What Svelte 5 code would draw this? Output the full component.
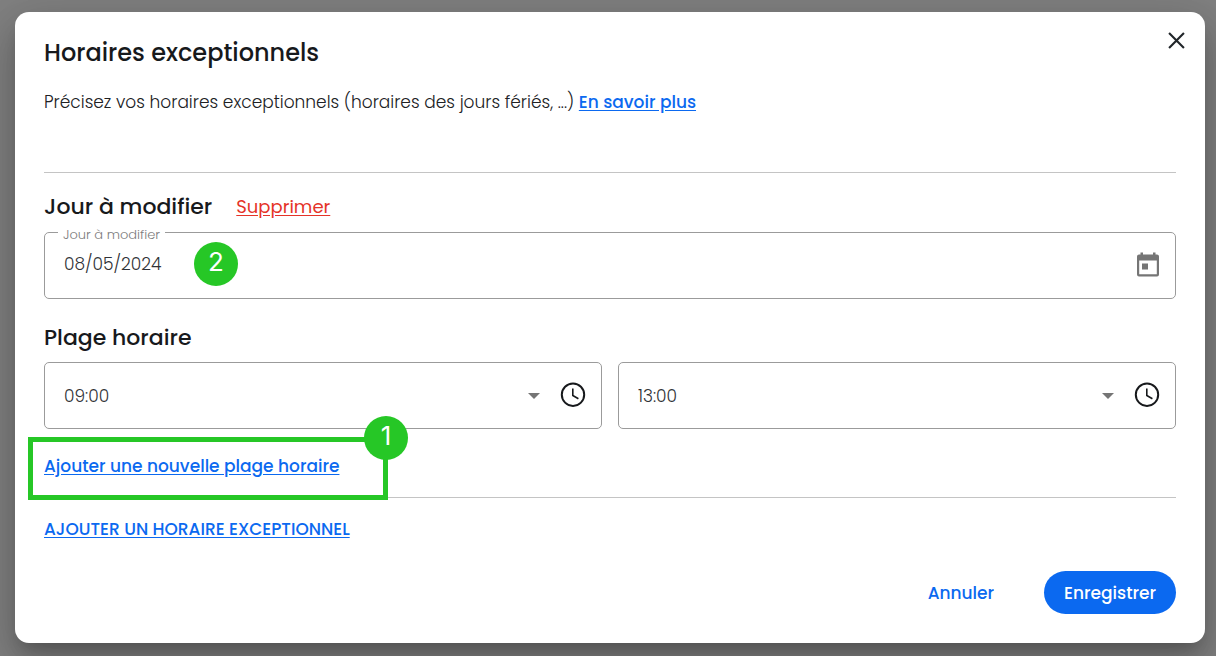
<script lang="ts">
	let date = $state('08/05/2024');
	let start = $state('09:00');
	let end = $state('13:00');

	const hours = Array.from({ length: 24 }, (_, h) => `${String(h).padStart(2, '0')}:00`);
</script>

{#snippet clock()}
	<svg class="clock" viewBox="0 0 26 26" aria-hidden="true">
		<circle cx="13" cy="12.7" r="11.2" fill="none" stroke="#17191c" stroke-width="2" />
		<path d="M12.8 6.5v7l5.6 3.2" fill="none" stroke="#17191c" stroke-width="1.6" />
	</svg>
{/snippet}

{#snippet arrow()}
	<svg class="arrow" viewBox="0 0 12 6" aria-hidden="true">
		<path d="M0 0h12L6 6z" fill="#757575" />
	</svg>
{/snippet}

<div class="backdrop">
	<div class="dialog" role="dialog" aria-modal="true" aria-labelledby="dialog-title">
		<header class="header">
			<h1 id="dialog-title">Horaires exceptionnels</h1>
			<button class="close" type="button" aria-label="Fermer">
				<svg viewBox="0 0 16 16" aria-hidden="true">
					<path d="M1 1l14 14M15 1L1 15" stroke="#202529" stroke-width="2" />
				</svg>
			</button>
		</header>

		<p class="intro">
			Précisez vos horaires exceptionnels (horaires des jours fériés, ...)
			<a href="#aide">En savoir plus</a>
		</p>

		<section class="day">
			<div class="day-title">
				<h2>Jour à modifier</h2>
				<button class="remove" type="button">Supprimer</button>
			</div>

			<div class="field date-field">
				<label class="floating-label" for="date">Jour à modifier</label>
				<input id="date" type="text" bind:value={date} />
				<button class="icon-button" type="button" aria-label="Ouvrir le calendrier">
					<svg viewBox="0 0 24 26" aria-hidden="true">
						<path
							d="M4.5 0.5H7v2h10v-2h2.5v2H21a2 2 0 0 1 2 2v18a2 2 0 0 1-2 2H3a2 2 0 0 1-2-2v-18a2 2 0 0 1 2-2h1.5zM3.2 8.5v13.8h17.6V8.5zM6 11.5h6v6H6z"
							fill="#757575"
							fill-rule="evenodd"
						/>
					</svg>
				</button>
				<span class="badge badge-date">2</span>
			</div>

			<h2 class="range-title">Plage horaire</h2>
			<div class="range">
				<div class="field">
					<select bind:value={start} aria-label="Heure de début">
						{#each hours as hour}
							<option value={hour}>{hour}</option>
						{/each}
					</select>
					{@render arrow()}
					{@render clock()}
				</div>
				<div class="field">
					<select bind:value={end} aria-label="Heure de fin">
						{#each hours as hour}
							<option value={hour}>{hour}</option>
						{/each}
					</select>
					{@render arrow()}
					{@render clock()}
				</div>
			</div>

			<div class="add-range">
				<a href="#plage">Ajouter une nouvelle plage horaire</a>
				<div class="highlight">
					<span class="badge badge-range">1</span>
				</div>
			</div>
		</section>

		<div class="add-day">
			<a href="#horaire">AJOUTER UN HORAIRE EXCEPTIONNEL</a>
		</div>

		<footer class="actions">
			<button class="cancel" type="button">Annuler</button>
			<button class="save" type="button">Enregistrer</button>
		</footer>
	</div>
</div>

<style>
	:global(body) {
		margin: 0;
		background: #808080;
	}

	.backdrop {
		box-sizing: border-box;
		min-height: 100vh;
		padding: 12px 11px 13px 15px;
		overflow: hidden;
		font-family: Poppins, Inter, sans-serif;
		font-size: 17px;
		line-height: 24px;
		font-weight: 300;
		color: #202124;
	}

	.dialog {
		padding: 25px 29px 29px;
		border-radius: 14px;
		background: #fff;
		box-shadow: 0 11px 15px -7px rgba(0, 0, 0, 0.2), 0 24px 38px 3px rgba(0, 0, 0, 0.14),
			0 9px 46px 8px rgba(0, 0, 0, 0.12);
	}

	h1,
	h2,
	p {
		margin: 0;
	}

	h1 {
		font-size: 24px;
		line-height: 32px;
		font-weight: 500;
		color: #17191c;
	}

	h2 {
		font-size: 22px;
		line-height: 32px;
		font-weight: 500;
		color: #17191c;
	}

	a {
		color: #0b69f0;
		font-weight: 500;
		text-underline-offset: 2px;
	}

	button {
		padding: 0;
		border: none;
		background: none;
		font: inherit;
		cursor: pointer;
	}

	.header {
		display: flex;
		align-items: flex-start;
		justify-content: space-between;
	}

	.close {
		margin: -5px -9px 0 0;
	}

	.close svg {
		display: block;
		width: 17px;
		height: 17px;
	}

	.intro {
		margin-top: 21px;
		padding-bottom: 58px;
		border-bottom: 1px solid #c4c4c4;
	}

	.day {
		padding-top: 18px;
		border-bottom: 1px solid #c4c4c4;
	}

	.day-title {
		display: flex;
		align-items: center;
		gap: 24px;
	}

	.remove {
		color: #e53328;
		font-size: 18px;
		font-weight: 400;
		text-decoration: underline;
		text-underline-offset: 2px;
	}

	.field {
		position: relative;
		box-sizing: border-box;
		display: flex;
		flex: 1;
		align-items: center;
		height: 67px;
		padding: 0 15px 2px 19px;
		border: 1px solid #9b9b9b;
		border-radius: 5px;
	}

	.date-field {
		margin-top: 9px;
	}

	.floating-label {
		position: absolute;
		top: -8px;
		left: 13px;
		padding: 0 5px;
		background: #fff;
		color: #7d7d7d;
		font-size: 13px;
		line-height: 20px;
	}

	input,
	select {
		flex: 1;
		min-width: 0;
		padding: 0;
		border: none;
		background: none;
		font: inherit;
		color: #303236;
		appearance: none;
		outline: none;
	}

	select {
		padding-top: 2px;
	}

	input {
		padding-bottom: 2px;
	}

	.icon-button svg {
		display: block;
		width: 24px;
		height: 26px;
	}

	.arrow {
		width: 12px;
		height: 6px;
		margin: 2px 20px 0 0;
	}

	.clock {
		width: 26px;
		height: 26px;
	}

	.range-title {
		margin-top: 23px;
	}

	.range {
		display: flex;
		gap: 16px;
		margin-top: 8px;
	}

	.add-range {
		position: relative;
		padding: 25px 0 19px;
	}

	.highlight {
		position: absolute;
		top: 8px;
		left: -16px;
		box-sizing: border-box;
		width: 360px;
		height: 63px;
		border: 5px solid #26c726;
		pointer-events: none;
	}

	.badge {
		position: absolute;
		width: 44px;
		height: 44px;
		border-radius: 50%;
		background: #26c726;
		color: #fff;
		font-family: Inter, Arial, sans-serif;
		font-size: 26px;
		font-weight: 400;
		line-height: 40px;
		text-align: center;
	}

	.badge-date {
		top: 9px;
		left: 149px;
	}

	.badge-range {
		top: -26px;
		right: -25px;
	}

	.add-day {
		margin-top: 19px;
	}

	.actions {
		display: flex;
		justify-content: flex-end;
		align-items: center;
		gap: 50px;
		margin-top: 30px;
	}

	.cancel {
		color: #0b69f0;
		font-weight: 500;
	}

	.save {
		height: 43px;
		padding: 0 20px;
		border-radius: 22px;
		background: #0b69f0;
		color: #fff;
		font-weight: 500;
	}
</style>
